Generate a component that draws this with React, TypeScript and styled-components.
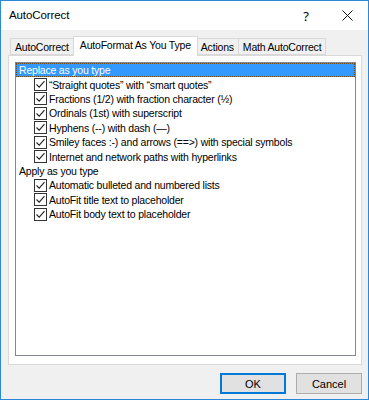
import React from "react";
import styled, { createGlobalStyle } from "styled-components";

const GlobalStyle = createGlobalStyle`
  html, body {
    margin: 0;
    padding: 0;
    background: #ffffff;
  }
  * {
    box-sizing: border-box;
  }
`;

const uiFont = `"Liberation Sans", Arial, sans-serif`;

const replaceItems = [
  "\u201CStraight quotes\u201D with \u201Csmart quotes\u201D",
  "Fractions (1/2) with fraction character (\u00BD)",
  "Ordinals (1st) with superscript",
  "Hyphens (--) with dash (\u2014)",
  "Smiley faces :-) and arrows (==>) with special symbols",
  "Internet and network paths with hyperlinks",
];

const applyItems = [
  "Automatic bulleted and numbered lists",
  "AutoFit title text to placeholder",
  "AutoFit body text to placeholder",
];

const tabs = ["AutoCorrect", "AutoFormat As You Type", "Actions", "Math AutoCorrect"];

const CheckBox: React.FC = () => (
  <Box>
    <svg width="11" height="11" viewBox="0 0 11 11">
      <path d="M1.5 5.5 L4.2 8.2 L9.5 2.2" fill="none" stroke="#222" strokeWidth="1.1" />
    </svg>
  </Box>
);

export default function App() {
  return (
    <>
      <GlobalStyle />
      <Window>
        <TitleBar>
          <Title>AutoCorrect</Title>
          <TitleButtons>
            <Help>?</Help>
            <Close>
              <svg width="11" height="11" viewBox="0 0 11 11">
                <path d="M0.5 0.5 L10.5 10.5 M10.5 0.5 L0.5 10.5" stroke="#111" strokeWidth="1" />
              </svg>
            </Close>
          </TitleButtons>
        </TitleBar>
        <Body>
          <TabRow>
            {tabs.map((t, i) => (
              <Tab key={t} $active={i === 1}>
                {t}
              </Tab>
            ))}
          </TabRow>
          <Panel>
            <ListBox>
              <GroupRow $selected>
                <FocusBox>Replace as you type</FocusBox>
              </GroupRow>
              {replaceItems.map((t) => (
                <ItemRow key={t}>
                  <CheckBox />
                  <span>{t}</span>
                </ItemRow>
              ))}
              <GroupRow>Apply as you type</GroupRow>
              {applyItems.map((t) => (
                <ItemRow key={t}>
                  <CheckBox />
                  <span>{t}</span>
                </ItemRow>
              ))}
            </ListBox>
          </Panel>
          <Footer>
            <DialogButton $default>OK</DialogButton>
            <DialogButton>Cancel</DialogButton>
          </Footer>
        </Body>
      </Window>
    </>
  );
}

const Window = styled.div`
  width: 369px;
  height: 400px;
  border: 1px solid #2b88d8;
  display: flex;
  flex-direction: column;
  font-family: ${uiFont};
  color: #000;
`;

const TitleBar = styled.div`
  height: 29px;
  background: #ffffff;
  display: flex;
  align-items: center;
  justify-content: space-between;
  padding-left: 8px;
`;

const Title = styled.div`
  font-size: 11.5px;
  letter-spacing: -0.1px;
  padding-bottom: 1px;
`;

const TitleButtons = styled.div`
  display: flex;
  align-items: center;
`;

const Help = styled.div`
  width: 40px;
  text-align: center;
  font-family: "Noto Sans", sans-serif;
  font-size: 13px;
  margin-right: 1px;
`;

const Close = styled.div`
  width: 40px;
  display: flex;
  justify-content: center;
  margin-right: 1px;
`;

const Body = styled.div`
  flex: 1;
  background: #f0f0f0;
  padding: 6px 6px 0 7px;
  display: flex;
  flex-direction: column;
`;

const TabRow = styled.div`
  display: flex;
  align-items: flex-end;
  height: 19px;
  padding-left: 2px;
  position: relative;
  z-index: 1;
`;

const Tab = styled.div<{ $active?: boolean }>`
  font-size: 10.5px;
  letter-spacing: -0.2px;
  padding: 0 ${(p) => (p.$active ? "6px" : "4px")};
  height: ${(p) => (p.$active ? "20px" : "17px")};
  line-height: ${(p) => (p.$active ? "17px" : "16px")};
  background: ${(p) => (p.$active ? "#ffffff" : "#f0f0f0")};
  border: 1px solid #d9d9d9;
  border-bottom: ${(p) => (p.$active ? "none" : "1px solid #d9d9d9")};
  margin: ${(p) => (p.$active ? "0 -1px -1px -1px" : "0")};
  position: relative;
  z-index: ${(p) => (p.$active ? 2 : 1)};
  white-space: nowrap;
  & + & {
    margin-left: ${(p) => (p.$active ? "-1px" : "1px")};
  }
`;

const Panel = styled.div`
  height: 310px;
  background: #ffffff;
  border: 1px solid #d9d9d9;
  padding: 6px 5px 8px 6px;
  display: flex;
`;

const ListBox = styled.div`
  flex: 1;
  border: 1px solid #828790;
  background: #ffffff;
  font-size: 10.5px;
  letter-spacing: -0.2px;
`;

const GroupRow = styled.div<{ $selected?: boolean }>`
  height: 14.4px;
  line-height: 14px;
  padding-left: ${(p) => (p.$selected ? "0" : "3px")};
  background: ${(p) => (p.$selected ? "#3399ff" : "transparent")};
  color: ${(p) => (p.$selected ? "#ffffff" : "#000000")};
  display: flex;
  white-space: nowrap;
`;

const FocusBox = styled.div`
  flex: 1;
  border: 1px dotted #6b4a1c;
  padding-left: 2px;
  line-height: 12px;
`;

const ItemRow = styled.div`
  height: 14.4px;
  display: flex;
  align-items: center;
  padding-left: 18px;
  white-space: nowrap;
  span {
    margin-left: 2px;
  }
`;

const Box = styled.div`
  width: 13px;
  height: 13px;
  border: 1px solid #333333;
  background: #ffffff;
  display: flex;
  align-items: center;
  justify-content: center;
  flex-shrink: 0;
`;

const Footer = styled.div`
  flex: 1;
  display: flex;
  justify-content: flex-end;
  align-items: flex-start;
  padding-top: 8px;
  gap: 10px;
`;

const DialogButton = styled.button<{ $default?: boolean }>`
  width: 66px;
  height: 21px;
  background: #e1e1e1;
  border: 1px solid ${(p) => (p.$default ? "#0078d7" : "#adadad")};
  box-shadow: ${(p) => (p.$default ? "inset 0 0 0 1px #0078d7" : "none")};
  font-family: ${uiFont};
  font-size: 11px;
  color: #000;
  padding: 0;
`;
